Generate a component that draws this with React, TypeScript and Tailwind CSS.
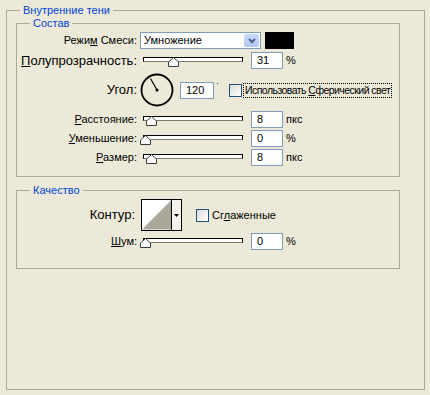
import React from 'react';

const sans = "font-['Tahoma','Liberation_Sans',sans-serif]";

function Thumb({ left }: { left: number }) {
    return (
        <svg className="absolute top-[5px]" style={{ left }} width="11" height="11" viewBox="0 0 11 11">
            <polygon points="5.5,0.5 10.5,5 10.5,9.5 0.5,9.5 0.5,5" fill="#fff" stroke="#3c3c3c" strokeWidth="1" />
        </svg>
    );
}

function Slider({ at }: { at: number }) {
    // at = absolute x of thumb centre; slider box starts at x=140
    return (
        <div className="relative w-[106px] h-[17px] shrink-0">
            <div className="absolute left-[3px] right-[3px] top-[5px] h-[5px] border border-black border-b-[#7a7a6e] bg-white" />
            <Thumb left={at - 140 - 5} />
        </div>
    );
}

function Field({ value, w = 'w-[32px]' }: { value: string; w?: string }) {
    return (
        <div className={`${w} h-[17px] shrink-0 border border-[#7f9db9] bg-white pl-[5px] text-[11px] leading-[15px]`}>
            {value}
        </div>
    );
}

function Check() {
    return <div className="w-[13px] h-[13px] shrink-0 border border-[#1c5180] bg-linear-to-br from-[#dcdcd7] to-white" />;
}

function Label({ children, big }: { children: React.ReactNode; big?: boolean }) {
    return (
        <div className={`w-[120px] shrink-0 text-right whitespace-nowrap ${big ? 'text-[13px]' : 'text-[11px]'}`}>{children}</div>
    );
}

function SliderRow({ label, at, value, unit, mt }: { label: React.ReactNode; at: number; value: string; unit: string; mt: string }) {
    return (
        <div className={`flex items-center h-[17px] ${mt}`}>
            <Label>{label}</Label>
            <div className="ml-[3px]">
                <Slider at={at} />
            </div>
            <div className="ml-[5px]">
                <Field value={value} />
            </div>
            <span className="ml-[3px] text-[11px]">{unit}</span>
        </div>
    );
}

function Dial() {
    return (
        <svg width="34" height="34" viewBox="0 0 34 34" className="shrink-0">
            <circle cx="17" cy="17" r="15.5" fill="none" stroke="#000" strokeWidth="1.8" />
            <line x1="17" y1="17" x2="10.5" y2="5.5" stroke="#000" strokeWidth="1.2" />
            <circle cx="17" cy="17" r="1.6" fill="#000" />
        </svg>
    );
}

function Contour() {
    return (
        <div className="flex w-[41px] h-[32px] border border-black bg-white shrink-0">
            <svg width="30" height="30" viewBox="0 0 30 30">
                <rect width="30" height="30" fill="#fff" />
                <polygon points="30,0 30,30 0,30" fill="#a9a89a" />
            </svg>
            <div className="w-[10px] border-l border-black bg-[#f4f3ee] flex items-center justify-center">
                <svg width="5" height="3" viewBox="0 0 5 3">
                    <polygon points="0,0 5,0 2.5,3" fill="#000" />
                </svg>
            </div>
        </div>
    );
}

export default function App() {
    return (
        <div className={`w-[430px] h-[395px] bg-[#ece9d8] pt-[3px] pl-[6px] text-black ${sans}`}>
            <fieldset className="w-[419px] h-[387px] border border-[#aca899]">
                <legend className="ml-[13px] px-[3px] text-[11px] leading-[14px] text-[#0046d5]">Внутренние тени</legend>

                <fieldset className="ml-[9px] w-[384px] border border-[#aca899] pt-[3px] pb-[10px]">
                    <legend className="ml-[13px] px-[3px] text-[11px] leading-[12px] text-[#0046d5]">Состав</legend>

                    <div className="flex items-center h-[17px]">
                        <Label>
                            Режи<u>м</u> Смеси:
                        </Label>
                        <div className="ml-[3px] flex w-[121px] h-[17px] border border-[#7f9db9] bg-white">
                            <div className="flex-1 pl-[3px] text-[11px] leading-[15px]">Умножение</div>
                            <div className="w-[15px] m-px rounded-[2px] bg-linear-to-b from-[#cad9fb] to-[#b2c7f5] flex items-center justify-center">
                                <svg width="8" height="6" viewBox="0 0 8 6">
                                    <polyline points="1,1 4,4 7,1" fill="none" stroke="#4d6185" strokeWidth="2" />
                                </svg>
                            </div>
                        </div>
                        <div className="ml-[4px] w-[29px] h-[17px] bg-black" />
                    </div>

                    <div className="flex items-center h-[17px] mt-[3px]">
                        <Label big>
                            <u>П</u>олупрозрачность:
                        </Label>
                        <div className="ml-[3px]">
                            <Slider at={173} />
                        </div>
                        <div className="ml-[5px]">
                            <Field value="31" />
                        </div>
                        <span className="ml-[3px] text-[11px]">%</span>
                    </div>

                    <div className="flex items-center h-[34px] mt-[4px]">
                        <Label big>Угол:</Label>
                        <div className="ml-[3px]">
                            <Dial />
                        </div>
                        <div className="ml-[6px]">
                            <Field value="120" w="w-[34px]" />
                        </div>
                        <span className="ml-[2px] self-start mt-[6px] text-[9px] leading-[9px]">·</span>
                        <div className="ml-[10px]">
                            <Check />
                        </div>
                        <div className="ml-px border border-dotted border-black px-[1px] text-[10.5px] leading-[13px] whitespace-nowrap tracking-[-0.55px]">
                            Использовать <u>С</u>ферический свет
                        </div>
                    </div>

                    <SliderRow label={<><u>Р</u>асстояние:</>} at={151} value="8" unit="пкс" mt="mt-[4px]" />
                    <SliderRow label={<><u>У</u>меньшение:</>} at={145} value="0" unit="%" mt="mt-[2px]" />
                    <SliderRow label={<><u>Р</u>азмер:</>} at={151} value="8" unit="пкс" mt="mt-[2px]" />
                </fieldset>

                <fieldset className="ml-[9px] mt-[7px] w-[384px] border border-[#aca899] pt-[3px] pb-[18px]">
                    <legend className="ml-[13px] px-[3px] text-[11px] leading-[12px] text-[#0046d5]">Качество</legend>

                    <div className="flex items-center h-[32px]">
                        <div className="w-[118px] shrink-0 text-right text-[13px]">Контур:</div>
                        <div className="ml-[6px]">
                            <Contour />
                        </div>
                        <div className="ml-[14px]">
                            <Check />
                        </div>
                        <span className="ml-[3px] text-[11px]">
                            Сг<u>л</u>аженные
                        </span>
                    </div>

                    <SliderRow label={<><u>Ш</u>ум:</>} at={145} value="0" unit="%" mt="mt-[2px]" />
                </fieldset>
            </fieldset>
        </div>
    );
}
